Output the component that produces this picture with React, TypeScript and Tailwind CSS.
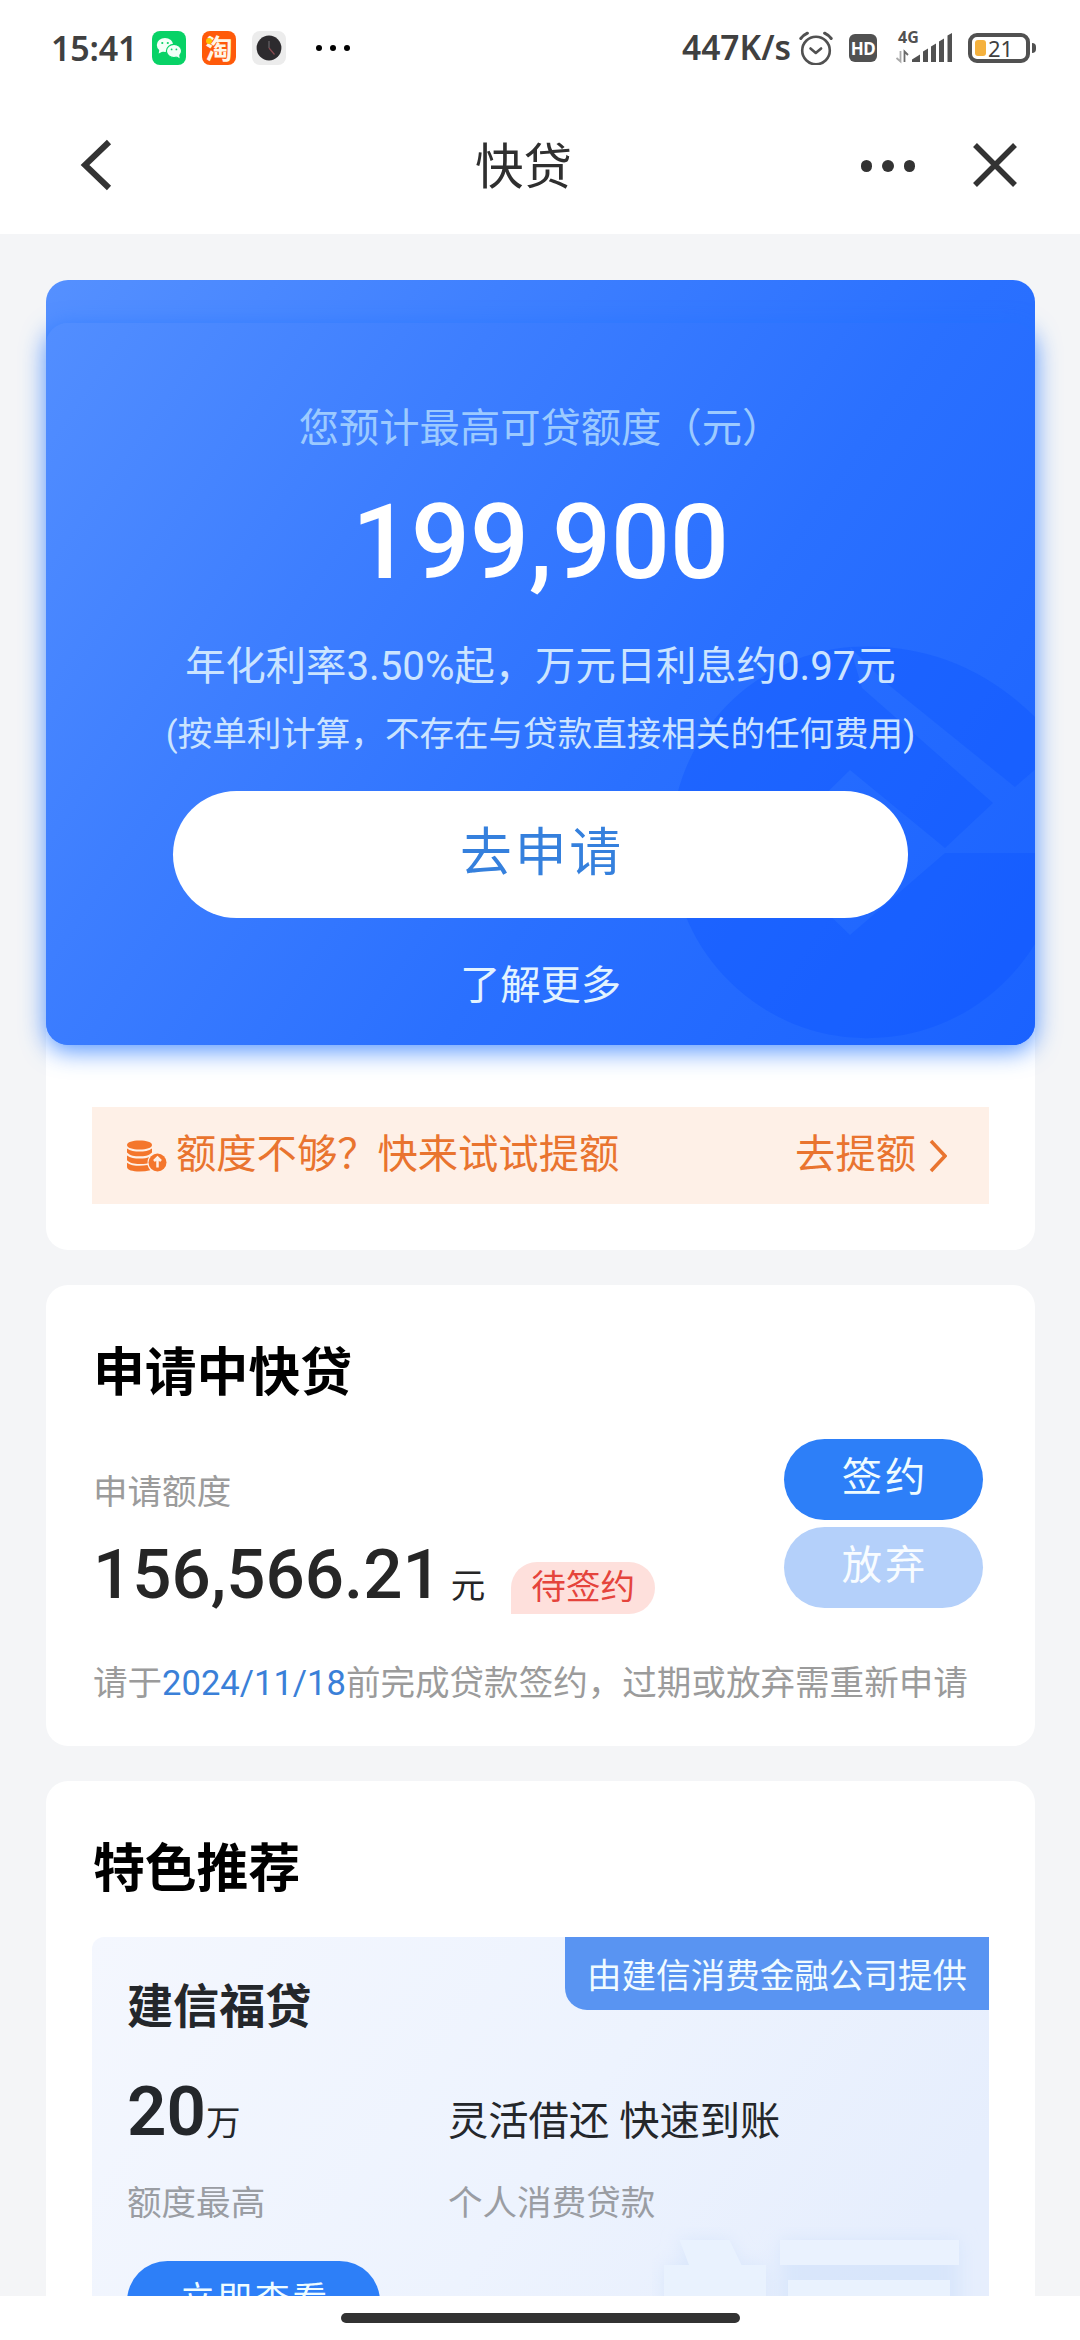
import React from "react";

const cjk = "font-['Roboto','Noto_Sans_CJK_SC',sans-serif]";

function WeChatIcon() {
  return (
    <svg viewBox="0 0 34 34" className="size-[34px]">
      <rect width="34" height="34" rx="8" fill="#08d266" />
      <ellipse cx="13" cy="14" rx="8.2" ry="7" fill="#f4fff8" />
      <path d="M7.5 18l-.8 4.6 4.5-2.3z" fill="#f4fff8" />
      <ellipse cx="22" cy="20" rx="7.6" ry="6.6" fill="#f4fff8" stroke="#08d266" strokeWidth="1.2" />
      <path d="M24 25l3.6 2.2-.5-4.4z" fill="#f4fff8" />
      <circle cx="10.3" cy="12" r="1.1" fill="#08d266" />
      <circle cx="15.8" cy="12" r="1.1" fill="#08d266" />
      <circle cx="19.6" cy="18.4" r="0.9" fill="#08d266" />
      <circle cx="24.4" cy="18.4" r="0.9" fill="#08d266" />
    </svg>
  );
}

function TaobaoIcon() {
  return (
    <div className="relative flex size-[34px] items-center justify-center rounded-lg bg-[#ff5a0a]">
      <span className="text-[27px] leading-none font-bold text-[#fff6e8]">淘</span>
      <span className="absolute top-[7px] left-1 size-[6px] rounded-full bg-[#ffc400]" />
    </div>
  );
}

function ClockIcon() {
  return (
    <svg viewBox="0 0 34 34" className="size-[34px]">
      <rect width="34" height="34" rx="8" fill="#ececec" />
      <circle cx="17" cy="17" r="12.4" fill="#2d2b2e" />
      <path d="M17 10v7" stroke="#5c5a5e" strokeWidth="1.5" />
      <path d="M17 17l5.5 6.5" stroke="#8a4a50" strokeWidth="1.2" />
    </svg>
  );
}

function AlarmIcon() {
  return (
    <svg viewBox="0 0 34 34" className="size-[34px]" fill="none" stroke="#515151" strokeLinecap="round">
      <circle cx="17" cy="19.5" r="13.8" strokeWidth="2.6" />
      <path d="M11.5 17.5l5.3 4.4 5.3-4.4" strokeWidth="2.6" strokeLinejoin="round" />
      <path d="M1.8 7.5Q4.5 4 8.4 2.2M32.2 7.5Q29.5 4 25.6 2.2" strokeWidth="3" />
    </svg>
  );
}

function SignalIcon() {
  return (
    <svg viewBox="0 0 58 34" className="h-[34px] w-[58px]">
      <path d="M5.5 20v10.500l-4-3.500" stroke="#aaa" strokeWidth="1.8" fill="none" />
      <path d="M9.5 31V20.500l3.5 3.5" stroke="#6b6b6b" strokeWidth="1.8" fill="none" />
      <g fill="#515151">
        <path d="M17 31v-2.500l8-5V31z" />
        <path d="M28 31V20.500l5-3V31z" />
        <path d="M36 31V15.500l5-3V31z" />
        <path d="M44 31V10.500l5-3V31z" />
        <path d="M52.500 31V4.500l4.500-2.500V31z" />
      </g>
    </svg>
  );
}

function BatteryIcon() {
  return (
    <div className="flex items-center gap-[2px]">
      <div className="flex h-[30px] w-[62px] items-center rounded-[9px] border-[4px] border-[#515151] pl-[3px]">
        <div className="h-4 w-[11px] rounded-[3px] bg-[#f5b13d]" />
        <span className="pl-[2px] text-[22px] leading-none text-[#404040]">21</span>
      </div>
      <div className="h-[10px] w-1 rounded-r-sm bg-[#515151]" />
    </div>
  );
}

function StatusBar() {
  return (
    <div className="flex h-24 items-center pl-[51px] pr-[44px] font-['Noto_Sans','Noto_Sans_CJK_SC',sans-serif]">
      <span className="w-[101px] text-[34px] leading-none font-semibold tracking-[-0.2px] text-[#404040]">15:41</span>
      <div className="flex items-center gap-4">
        <WeChatIcon />
        <TaobaoIcon />
        <ClockIcon />
      </div>
      <div className="ml-[30px] flex gap-2">
        <span className="size-[6px] rounded-full bg-black" />
        <span className="size-[6px] rounded-full bg-black" />
        <span className="size-[6px] rounded-full bg-black" />
      </div>
      <div className="ml-auto flex items-center">
        <span className="w-[117px] text-[33.5px] leading-none font-semibold text-[#404040]">447K/s</span>
        <AlarmIcon />
        <div className="ml-4 flex h-7 w-7 items-center justify-center rounded-md bg-[#515151] text-[17px] leading-none font-bold tracking-[-0.5px] text-white">
          HD
        </div>
        <div className="relative ml-[18px]">
          <SignalIcon />
          <span className="absolute top-[-2px] left-[3px] text-[16px] leading-none font-bold text-[#515151]">4G</span>
        </div>
        <div className="ml-[15px]">
          <BatteryIcon />
        </div>
      </div>
    </div>
  );
}

function NavBar() {
  return (
    <div className="flex h-[138px] items-center pr-[63px] pl-[80px]">
      <svg viewBox="0 0 32 52" className="h-[52px] w-8" fill="none" stroke="#333" strokeWidth="6">
        <path d="M29 3L5 26l24 23" strokeLinejoin="miter" />
      </svg>
      <h1 className="ml-[363px] pt-[7px] text-[48.5px] leading-none text-[#2f2f2f]">快贷</h1>
      <div className="ml-auto flex items-center gap-[10px] pr-[58px] pt-[2px]">
        <span className="size-[11.5px] rounded-full bg-[#333]" />
        <span className="size-[11.5px] rounded-full bg-[#333]" />
        <span className="size-[11.5px] rounded-full bg-[#333]" />
      </div>
      <svg viewBox="0 0 44 44" className="size-11" fill="none" stroke="#333" strokeWidth="5.5">
        <path d="M2 2l40 40M42 2L2 42" />
      </svg>
    </div>
  );
}

function BankMark() {
  return (
    <svg viewBox="46 280 989 765" className="absolute inset-0 h-full w-full">
      <g fill="#0a52ff" fillOpacity="0.32">
        <path d="M850 647A196 196 0 1 0 1063 853H945L850 935L765 853L850 770L945 848L993 803L862 688Z" />
        <path d="M850 647Q960 640 1040 722V765L1015 787L885 682Z" />
      </g>
    </svg>
  );
}

function QuotaCard() {
  return (
    <section className="rounded-[22px] bg-white pb-[46px]">
      <div className="relative rounded-[22px] bg-[linear-gradient(125deg,#5590ff_0%,#3f80ff_30%,#2a70ff_62%,#1f67ff_100%)]">
        <div className="absolute inset-x-0 top-[43px] bottom-0 rounded-[22px] bg-[linear-gradient(125deg,#528eff_0%,#3d7eff_30%,#2a70ff_60%,#1a62ff_100%)] shadow-[0_6px_24px_rgba(30,115,255,0.75)]" />
        <div className="relative flex h-[765px] flex-col items-center overflow-hidden rounded-[22px]">
          <BankMark />
          <div className="relative flex flex-col items-center">
            <p className="mt-[119px] text-[40.3px] leading-[60px] text-[#9ccaff]">您预计最高可贷额度（元）</p>
            <p className="mt-[24px] text-[103.7px] leading-[120px] font-medium text-white">199,900</p>
            <p className="mt-[34px] text-[40.3px] leading-[60px] text-[#cbe4ff]">年化利率3.50%起，万元日利息约0.97元</p>
            <p className="mt-[11px] text-[34.56px] leading-[52px] text-[#cbe4ff]">(按单利计算，不存在与贷款直接相关的任何费用)</p>
            <button className="mt-[31px] h-[127px] w-[735px] rounded-full bg-white pb-[1px] pl-[3px] text-[51.8px] tracking-[2.88px] text-[#3580dd]">
              去申请
            </button>
            <a className="mt-[38px] text-[40.3px] leading-[60px] text-[#e2f3ff]">了解更多</a>
          </div>
        </div>
      </div>
      <div className="mx-[46px] mt-[62px] flex h-[97px] items-center bg-[#fef0e7] pr-[42px] pl-[35px] text-[40.3px] text-[#e9742f]">
        <svg viewBox="0 0 40 32" className="h-8 w-10">
          <g fill="#f4762c">
            <path d="M0 5c0-2.800 5.500-4.500 12.500-4.500S25 2.200 25 5s-5.500 4.500-12.500 4.500S0 7.800 0 5z" />
            <path d="M0 8.500c3 2.500 8 3 12.500 3S22 11 25 8.500v4c-3 3.300-8 3.800-12.500 3.800S3 15.800 0 12.500z" />
            <path d="M0 15.500c3 2.500 8 3 12.500 3S20 18.200 22 17q-1.500 2-1.500 6.500-4 .5-8 .5C7 24 3 23.300 0 20.300z" />
            <path d="M0 22.700c3 2.500 8 3 12.500 3q4 0 8-.6 1 3.300 2.800 5.100-5 1.300-10.800 1.300C5.500 31.500 0 30 0 27z" />
            <circle cx="30.500" cy="22.500" r="9" />
          </g>
          <path d="M30.500 27.500v-9M27 21l3.500-3.500L34 21" stroke="#fef0e7" strokeWidth="2.5" fill="none" />
        </svg>
        <span className="ml-[9px]">额度不够？快来试试提额</span>
        <span className="ml-auto">去提额</span>
        <svg viewBox="0 0 18 34" className="ml-[13px] h-[34px] w-[18px]" fill="none" stroke="#e9742f" strokeWidth="3.5">
          <path d="M2 2l14 15L2 32" />
        </svg>
      </div>
    </section>
  );
}

function ApplicationCard() {
  return (
    <section className="mt-[35px] h-[461px] rounded-[22px] bg-white pr-[52px] pl-[47px]">
      <h2 className="pt-[51px] text-[51.8px] leading-[76px] font-bold text-black">申请中快贷</h2>
      <div className="flex h-[176px] justify-between pt-[27px]">
        <div>
          <p className="mt-[27px] text-[34.56px] leading-[52px] text-[#9b9b9b]">申请额度</p>
          <div className="mt-[12px] flex items-baseline">
            <span className="text-[69.1px] leading-[90px] font-medium text-[#262626]">156,566.21</span>
            <span className="ml-[9px] text-[34.56px] leading-[52px] text-[#262626]">元</span>
            <span className="relative top-[1px] ml-[26px] h-[52px] rounded-[26px] rounded-bl-none bg-[#fee0dc] px-5 text-[34.56px] leading-[50px] text-[#e5443c]">
              待签约
            </span>
          </div>
        </div>
        <div className="flex flex-col gap-[7px]">
          <button className="h-[81px] w-[199px] shrink-0 rounded-full bg-[#2d7ff8] pb-[2px] pl-[3px] text-[40.3px] tracking-[2.88px] text-[#effcff]">签约</button>
          <button className="h-[81px] w-[199px] shrink-0 rounded-full bg-[#b4d0fa] pb-[2px] pl-[3px] text-[40.3px] tracking-[2.88px] text-[#f8fcff]">放弃</button>
        </div>
      </div>
      <p className="mt-[69px] text-[34.56px] leading-[52px] text-[#9b9b9b]">
        请于<span className="text-[#3a80d8]">2024/11/18</span>前完成贷款签约，过期或放弃需重新申请
      </p>
    </section>
  );
}

function FeaturedCard() {
  return (
    <section className="mt-[35px] rounded-t-[22px] bg-white px-[46px]">
      <h2 className="pt-[51px] pl-[1px] text-[51.8px] leading-[76px] font-bold text-black">特色推荐</h2>
      <div className="relative mt-[29px] h-[460px] overflow-hidden rounded-tl-xl bg-[linear-gradient(125deg,#f4f7fe_0%,#edf3fe_50%,#e6eefd_85%)] pl-[35px]">
        <svg viewBox="0 0 330 100" className="absolute top-[290px] left-[560px] h-[100px] w-[330px]">
          <defs>
            <filter id="glow" x="-20%" y="-50%" width="140%" height="200%">
              <feGaussianBlur stdDeviation="9" />
            </filter>
          </defs>
          <path d="M26 13h50l12 25h26v62H12V38h24zM128 13h180v87H128z" fill="#d3e3fb" fillOpacity="0.7" filter="url(#glow)" />
          <path d="M27.500 13h50l12 25h24.500v62H12V38h25z" fill="#e9f2fe" />
          <path d="M128 13h179v25H128z" fill="#eaf2fe" />
          <path d="M136 53h162v47H136z" fill="#e9f2fe" />
        </svg>
        <span className="absolute top-0 right-0 h-[73px] w-[424px] rounded-bl-[22px] bg-[#5994f2] pl-[22px] text-[34.56px] leading-[79px] text-[#f0fbff]">
          由建信消费金融公司提供
        </span>
        <h3 className="pt-[37px] text-[46.1px] leading-[66px] font-bold text-[#24272b]">建信福贷</h3>
        <div className="relative mt-[27px] flex items-baseline">
          <p className="w-[321px] leading-[90px] text-[#24272b]">
            <span className="text-[69.1px] font-semibold">20</span>
            <span className="text-[34.56px]">万</span>
          </p>
          <p className="text-[40.3px] text-[#24272b]">灵活借还 快速到账</p>
        </div>
        <div className="relative mt-[2px] flex text-[34.56px] leading-[52px] text-[#9a9da3]">
          <p className="w-[321px]">额度最高</p>
          <p>个人消费贷款</p>
        </div>
        <button className="mt-[32px] h-[81px] w-[253px] rounded-full bg-[#2d7ff8] pb-1 pl-[3px] text-[34.56px] tracking-[2.88px] text-[#effcff]">立即查看</button>
      </div>
    </section>
  );
}

export default function App() {
  return (
    <div className={`flex h-[2340px] w-[1080px] flex-col overflow-hidden bg-white ${cjk}`}>
      <header>
        <StatusBar />
        <NavBar />
      </header>
      <main className="h-[2062px] overflow-hidden bg-[#f4f5f7] pt-[46px] pr-[45px] pl-[46px]">
        <QuotaCard />
        <ApplicationCard />
        <FeaturedCard />
      </main>
      <footer className="flex h-11 items-center justify-center">
        <div className="h-[10px] w-[399px] rounded-full bg-[#323232]" />
      </footer>
    </div>
  );
}
